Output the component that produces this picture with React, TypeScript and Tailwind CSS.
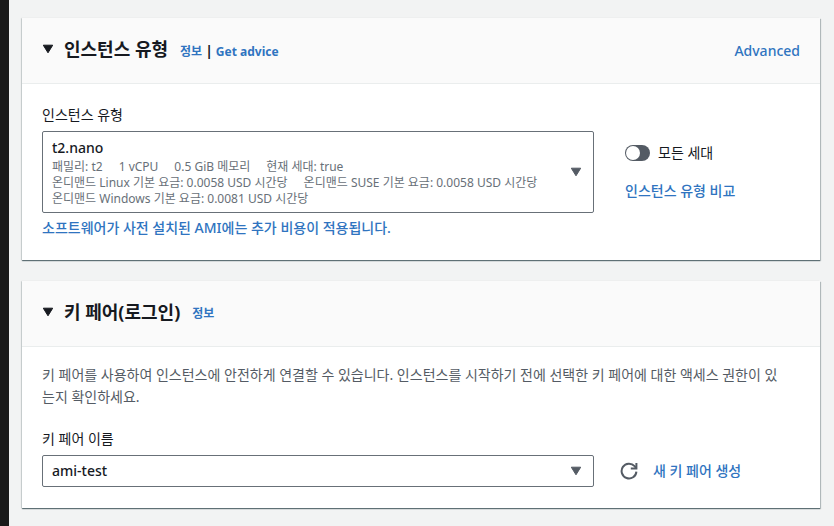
import React, { useState } from "react";

const specs = [
  ["패밀리: t2", "1 vCPU", "0.5 GiB 메모리", "현재 세대: true"],
  ["온디맨드 Linux 기본 요금: 0.0058 USD 시간당", "온디맨드 SUSE 기본 요금: 0.0058 USD 시간당"],
  ["온디맨드 Windows 기본 요금: 0.0081 USD 시간당"],
];

const Caret = ({ className = "" }: { className?: string }) => (
  <svg viewBox="0 0 12 10" className={`w-3 h-[10px] shrink-0 ${className}`} fill="currentColor" stroke="currentColor" strokeLinejoin="round" aria-hidden="true">
    <path d="M1.3 1.2h9.4L6 8.8z" />
  </svg>
);

const RefreshIcon = () => (
  <svg viewBox="0 0 18 18" className="w-[18px] h-[18px]" fill="none" stroke="currentColor" strokeWidth="2" aria-hidden="true">
    <path d="M16.4 9.6A7.4 7.4 0 1 1 14.6 4.2L16 6" />
    <path d="M16.4 1v5.6h-5.6" />
  </svg>
);

const Panel = ({
  title,
  info,
  actions,
  children,
}: {
  title: string;
  info: React.ReactNode;
  actions?: React.ReactNode;
  children: React.ReactNode;
}) => (
  <section className="bg-white shadow-[0_1px_1px_0_rgba(0,28,36,0.5),1px_1px_1px_0_rgba(0,28,36,0.2),-1px_0_1px_0_rgba(0,28,36,0.1)]">
    <header className="flex items-center justify-between px-5 h-[66px] bg-[#fafafa] border-b border-[#eaeded]">
      <div className="flex items-center pb-1">
        <button type="button" aria-expanded="true" className="flex items-center gap-[10px] text-[#16191f]">
          <Caret />
          <h2 className="text-lg leading-[22px] font-bold">{title}</h2>
        </button>
        <div className="ml-3 pt-[5px] flex items-baseline gap-[3px] text-xs leading-[22px] font-bold">{info}</div>
      </div>
      {actions}
    </header>
    {children}
  </section>
);

export default function App() {
  const [allGenerations, setAllGenerations] = useState(false);

  return (
    <div className="min-h-screen bg-[#f2f3f3] border-l-[9px] border-[#1a1a1a] pl-[13px] pr-[14px] pt-[18px] pb-4 flex flex-col gap-[21px] font-['Noto_Sans','Noto_Sans_CJK_KR',sans-serif] text-sm leading-[22px] text-[#16191f]">
      <Panel
        title="인스턴스 유형"
        info={
          <>
            <a href="#info" className="text-[#2f74c0]">정보</a>
            <span className="text-sm leading-[22px]">|</span>
            <a href="#advice" className="text-[#2f74c0]">Get advice</a>
          </>
        }
        actions={<a href="#advanced" className="font-medium text-[#2f74c0]">Advanced</a>}
      >
        <div className="px-5 pt-5 pb-[21px] grid grid-cols-[46fr_15fr] gap-x-[26px]">
          <div className="min-w-0">
            <label htmlFor="instance-type" className="block mb-[5px]">인스턴스 유형</label>
            <button
              id="instance-type"
              type="button"
              aria-haspopup="listbox"
              className="w-full flex items-center justify-between rounded-[2px] border border-[#687078] pl-[9px] pr-[11px] py-[5px] text-left"
            >
              <span className="block">
                <span className="block font-medium">t2.nano</span>
                {specs.map((line) => (
                  <span key={line[0]} className="flex flex-wrap gap-x-4 text-xs leading-4 text-[#687078]">
                    {line.map((item) => (
                      <span key={item}>{item}</span>
                    ))}
                  </span>
                ))}
              </span>
              <Caret className="text-[#545b64]" />
            </button>
            <a href="#ami" className="mt-1 block font-medium text-[#2f74c0]">
              소프트웨어가 사전 설치된 AMI에는 추가 비용이 적용됩니다.
            </a>
          </div>

          <div className="pt-[38px] pl-[5px] flex flex-col items-start gap-4">
            <label className="flex items-center gap-2">
              <input
                type="checkbox"
                role="switch"
                checked={allGenerations}
                onChange={(e) => setAllGenerations(e.target.checked)}
                className="appearance-none w-[25px] h-4 p-px rounded-full bg-[#545b64] checked:bg-[#2f74c0] before:block before:size-[14px] before:rounded-full before:bg-white checked:before:ml-[9px]"
              />
              모든 세대
            </label>
            <a href="#compare" className="font-medium text-[#2f74c0]">인스턴스 유형 비교</a>
          </div>
        </div>
      </Panel>

      <Panel title="키 페어(로그인)" info={<a href="#key-info" className="text-[#2f74c0]">정보</a>}>
        <div className="px-5 pt-[17px] pb-[21px]">
          <p className="mb-5 pr-3 break-all text-[#545b64]">
            키 페어를 사용하여 인스턴스에 안전하게 연결할 수 있습니다. 인스턴스를 시작하기 전에 선택한 키 페어에 대한 액세스 권한이 있는지 확인하세요.
          </p>
          <label htmlFor="key-pair" className="block mb-[5px]">키 페어 이름</label>
          <div className="grid grid-cols-[46fr_15fr] gap-x-[26px] items-center">
            <div className="grid items-center">
              <select
                id="key-pair"
                defaultValue="ami-test"
                className="col-start-1 row-start-1 appearance-none w-full h-8 rounded-[2px] border border-[#687078] bg-white pl-[9px] pr-8 font-medium"
              >
                <option value="ami-test">ami-test</option>
              </select>
              <Caret className="col-start-1 row-start-1 justify-self-end mr-3 text-[#545b64] pointer-events-none" />
            </div>
            <div className="flex items-center gap-[15px]">
              <button type="button" aria-label="새로 고침" className="text-[#545b64]">
                <RefreshIcon />
              </button>
              <a href="#create-key" className="font-medium text-[#2f74c0]">새 키 페어 생성</a>
            </div>
          </div>
        </div>
      </Panel>
    </div>
  );
}
